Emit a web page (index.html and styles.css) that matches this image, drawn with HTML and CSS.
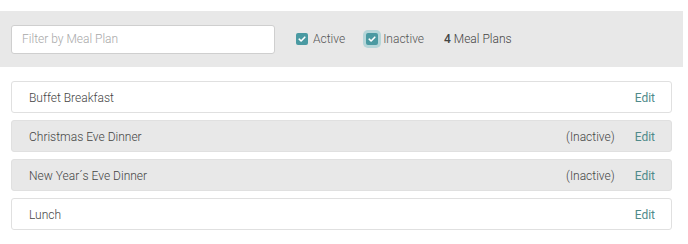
FILE: index.html
```html
<!DOCTYPE html>
<html>
 <head>
  <title>Meal Plans</title>
  <link rel="stylesheet" href="styles.css">
 </head>
 <body>
  <div class="page">
   <div class="filterbar">
    <input class="filter" type="text" placeholder="Filter by Meal Plan"/>
    <label class="check"><span class="box"><svg viewBox="0 0 12 12" width="12" height="12"><path d="M3.2 6.2 L5.1 8 L8.8 4.2" fill="none" stroke="#fff" stroke-width="1.6" stroke-linecap="round" stroke-linejoin="round"/></svg></span>Active</label>
    <label class="check focused"><span class="box"><svg viewBox="0 0 12 12" width="12" height="12"><path d="M3.2 6.2 L5.1 8 L8.8 4.2" fill="none" stroke="#fff" stroke-width="1.6" stroke-linecap="round" stroke-linejoin="round"/></svg></span>Inactive</label>
    <span class="count"><b>4</b> Meal Plans</span>
   </div>
   <div class="plans">
    <div class="plan">
     <span class="name">Buffet Breakfast</span>
     <span class="edit">Edit</span>
    </div>
    <div class="plan inactive">
     <span class="name">Christmas Eve Dinner</span>
     <span class="status">(Inactive)</span>
     <span class="edit">Edit</span>
    </div>
    <div class="plan inactive">
     <span class="name">New Year´s Eve Dinner</span>
     <span class="status">(Inactive)</span>
     <span class="edit">Edit</span>
    </div>
    <div class="plan">
     <span class="name">Lunch</span>
     <span class="edit">Edit</span>
    </div>
   </div>
  </div>
 </body>
</html>
```

FILE: styles.css
```css
html, body {
    margin: 0;
    background: #fff;
}

body {
    font-family: Roboto, "Liberation Sans", sans-serif;
    font-weight: 300;
    font-size: 12px;
    color: #444;
}

div.page {
    width: 683px;
    padding-top: 11px;
}

div.filterbar {
    display: flex;
    align-items: center;
    height: 56px;
    padding: 0 11px;
    background-color: #e8e8e8;
}

input.filter {
    box-sizing: border-box;
    width: 264px;
    height: 29px;
    margin: 0;
    padding: 0 10px;
    border: 1px solid #cfcfcf;
    border-radius: 3px;
    background: #fff;
    font-family: inherit;
    font-weight: 300;
    font-size: 12px;
    color: #444;
}

input.filter::placeholder {
    color: #a8a8a8;
}

label.check {
    display: flex;
    align-items: center;
    margin-left: 21px;
    color: #555;
}

span.box {
    display: flex;
    align-items: center;
    justify-content: center;
    width: 12px;
    height: 12px;
    margin-right: 5px;
    border-radius: 2px;
    background-color: #4a9aa2;
}

label.focused span.box {
    box-shadow: 0 0 0 3px #b5d6d9;
}

span.count {
    margin-left: 20px;
    color: #444;
}

span.count b {
    font-weight: 500;
}

div.plans {
    display: flex;
    flex-direction: column;
    gap: 7px;
    padding: 14px 11px 0 11px;
}

div.plan {
    display: flex;
    align-items: center;
    box-sizing: border-box;
    height: 32px;
    padding: 1px 16px 0 17px;
    border: 1px solid #e0e0e0;
    border-radius: 3px;
    background-color: #fff;
}

div.plan.inactive {
    background-color: #e8e8e8;
    border-color: #e0e0e0;
}

span.name {
    flex: 1;
}

span.status {
    margin-right: 20px;
    color: #444;
}

span.edit {
    color: #4f8a8a;
    font-weight: 400;
    cursor: pointer;
}
```
